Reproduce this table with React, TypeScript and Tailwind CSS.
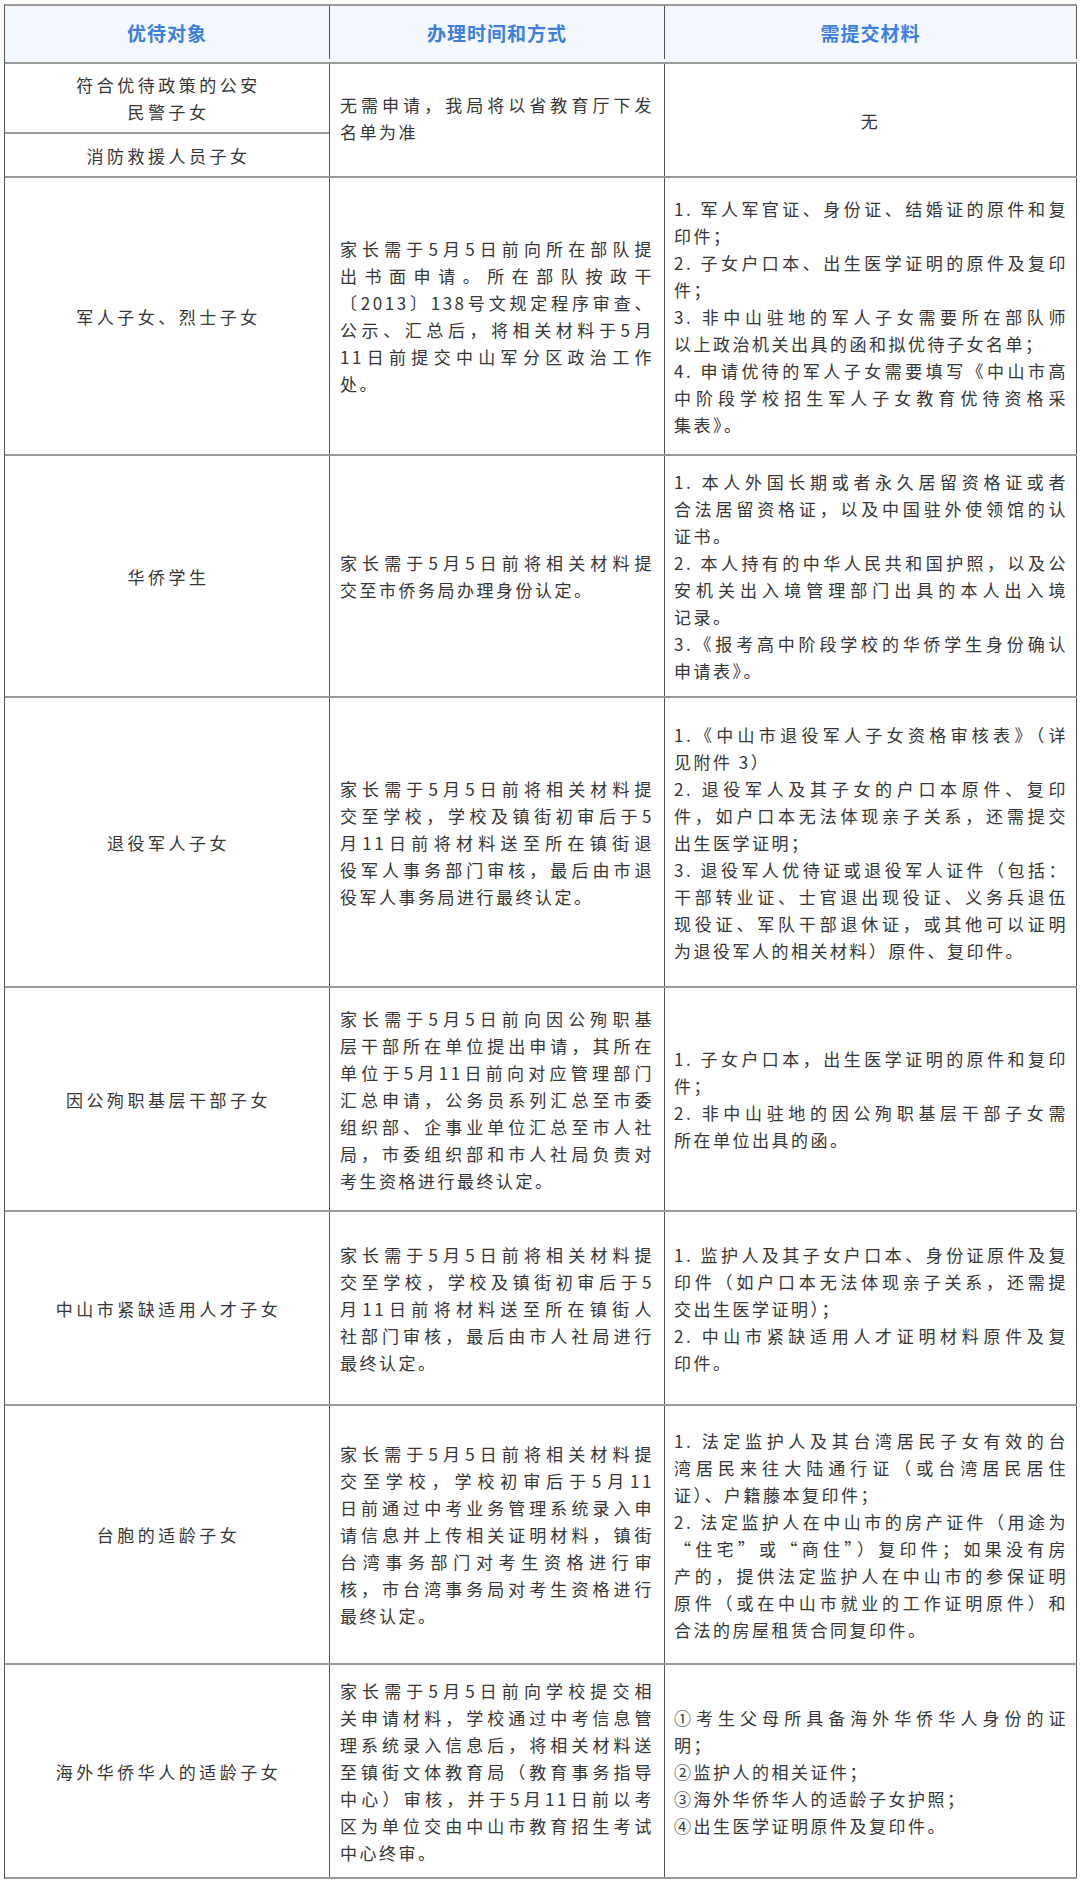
import React from "react";

type Cell = string[][];

interface Row {
    label: string[];
    height: string;
    process: Cell;
    materials: Cell;
}

const rows: Row[] = [
    {
        label: ["军人子女、烈士子女"],
        height: "h-[278px]",
        process: [
            [
                "家长需于5月5日前向所在部队提",
                "出书面申请。所在部队按政干",
                "〔2013〕138号文规定程序审查、",
                "公示、汇总后，将相关材料于5月",
                "11日前提交中山军分区政治工作",
                "处。",
            ],
        ],
        materials: [
            ["1. 军人军官证、身份证、结婚证的原件和复", "印件；"],
            ["2. 子女户口本、出生医学证明的原件及复印", "件；"],
            ["3. 非中山驻地的军人子女需要所在部队师", "以上政治机关出具的函和拟优待子女名单；"],
            ["4. 申请优待的军人子女需要填写《中山市高", "中阶段学校招生军人子女教育优待资格采", "集表》。"],
        ],
    },
    {
        label: ["华侨学生"],
        height: "h-[242px]",
        process: [["家长需于5月5日前将相关材料提", "交至市侨务局办理身份认定。"]],
        materials: [
            ["1. 本人外国长期或者永久居留资格证或者", "合法居留资格证，以及中国驻外使领馆的认", "证书。"],
            ["2. 本人持有的中华人民共和国护照，以及公", "安机关出入境管理部门出具的本人出入境", "记录。"],
            ["3.《报考高中阶段学校的华侨学生身份确认", "申请表》。"],
        ],
    },
    {
        label: ["退役军人子女"],
        height: "h-[290px]",
        process: [
            [
                "家长需于5月5日前将相关材料提",
                "交至学校，学校及镇街初审后于5",
                "月11日前将材料送至所在镇街退",
                "役军人事务部门审核，最后由市退",
                "役军人事务局进行最终认定。",
            ],
        ],
        materials: [
            ["1.《中山市退役军人子女资格审核表》（详", "见附件 3）"],
            ["2. 退役军人及其子女的户口本原件、复印", "件，如户口本无法体现亲子关系，还需提交", "出生医学证明；"],
            [
                "3. 退役军人优待证或退役军人证件（包括：",
                "干部转业证、士官退出现役证、义务兵退伍",
                "现役证、军队干部退休证，或其他可以证明",
                "为退役军人的相关材料）原件、复印件。",
            ],
        ],
    },
    {
        label: ["因公殉职基层干部子女"],
        height: "h-[224px]",
        process: [
            [
                "家长需于5月5日前向因公殉职基",
                "层干部所在单位提出申请，其所在",
                "单位于5月11日前向对应管理部门",
                "汇总申请，公务员系列汇总至市委",
                "组织部、企事业单位汇总至市人社",
                "局，市委组织部和市人社局负责对",
                "考生资格进行最终认定。",
            ],
        ],
        materials: [
            ["1. 子女户口本，出生医学证明的原件和复印", "件；"],
            ["2. 非中山驻地的因公殉职基层干部子女需", "所在单位出具的函。"],
        ],
    },
    {
        label: ["中山市紧缺适用人才子女"],
        height: "h-[194px]",
        process: [
            [
                "家长需于5月5日前将相关材料提",
                "交至学校，学校及镇街初审后于5",
                "月11日前将材料送至所在镇街人",
                "社部门审核，最后由市人社局进行",
                "最终认定。",
            ],
        ],
        materials: [
            ["1. 监护人及其子女户口本、身份证原件及复", "印件（如户口本无法体现亲子关系，还需提", "交出生医学证明）；"],
            ["2. 中山市紧缺适用人才证明材料原件及复", "印件。"],
        ],
    },
    {
        label: ["台胞的适龄子女"],
        height: "h-[259px]",
        process: [
            [
                "家长需于5月5日前将相关材料提",
                "交至学校，学校初审后于5月11",
                "日前通过中考业务管理系统录入申",
                "请信息并上传相关证明材料，镇街",
                "台湾事务部门对考生资格进行审",
                "核，市台湾事务局对考生资格进行",
                "最终认定。",
            ],
        ],
        materials: [
            ["1. 法定监护人及其台湾居民子女有效的台", "湾居民来往大陆通行证（或台湾居民居住", "证）、户籍藤本复印件；"],
            [
                "2. 法定监护人在中山市的房产证件（用途为",
                "“住宅”或“商住”）复印件；如果没有房",
                "产的，提供法定监护人在中山市的参保证明",
                "原件（或在中山市就业的工作证明原件）和",
                "合法的房屋租赁合同复印件。",
            ],
        ],
    },
    {
        label: ["海外华侨华人的适龄子女"],
        height: "h-[214px]",
        process: [
            [
                "家长需于5月5日前向学校提交相",
                "关申请材料，学校通过中考信息管",
                "理系统录入信息后，将相关材料送",
                "至镇街文体教育局（教育事务指导",
                "中心）审核，并于5月11日前以考",
                "区为单位交由中山市教育招生考试",
                "中心终审。",
            ],
        ],
        materials: [
            ["①考生父母所具备海外华侨华人身份的证", "明；"],
            ["②监护人的相关证件；"],
            ["③海外华侨华人的适龄子女护照；"],
            ["④出生医学证明原件及复印件。"],
        ],
    },
];

// every line but the last of a paragraph is spread to the full width
const Paragraphs = ({ cell }: { cell: Cell }) => (
    <div className="w-full">
        {cell.map((para, i) => (
            <div key={i}>
                {para.map((line, j) => (
                    <div
                        key={j}
                        className={
                            j < para.length - 1
                                ? "text-justify [text-align-last:justify]"
                                : "text-left"
                        }
                    >
                        {line}
                    </div>
                ))}
            </div>
        ))}
    </div>
);

export default function App() {
    return (
        <div
            lang="zh-CN"
            className="min-h-[1881px] w-[1080px] bg-white pt-[4px] pl-[4px] text-[17px] leading-[27px] tracking-[2.5px] text-[#363636] font-['Noto_Sans_CJK_SC','Noto_Sans',sans-serif]"
        >
            <div className="w-[1073px] border-t-2 border-l border-t-[#9a9a9a] border-l-[#555]">
                {/* Header */}
                <div className="flex h-[58px] border-b-2 border-[#9a9a9a] bg-[#f3f7fe] pb-[3px] text-[19px] font-bold tracking-[1px] text-[#3d7fdd]">
                    <div className="flex w-[325px] items-center justify-center border-r border-[#555]">优待对象</div>
                    <div className="flex w-[335px] items-center justify-center border-r border-[#555]">办理时间和方式</div>
                    <div className="flex w-[412px] items-center justify-center border-r border-[#555]">需提交材料</div>
                </div>

                {/* First row: two target groups share one procedure */}
                <div className="flex h-[114px] border-b-2 border-[#9a9a9a]">
                    <div className="flex w-[325px] flex-col border-r border-[#555] tracking-[3.5px]">
                        <div className="flex h-[70px] flex-col items-center justify-center border-b-2 border-[#9a9a9a] pl-[3px] text-center">
                            <div>符合优待政策的公安</div>
                            <div>民警子女</div>
                        </div>
                        <div className="flex flex-1 items-center justify-center pl-[3px]">消防救援人员子女</div>
                    </div>
                    <div className="flex w-[335px] items-center border-r border-[#555] px-[10px] pb-[4px]">
                        <Paragraphs cell={[["无需申请，我局将以省教育厅下发", "名单为准"]]} />
                    </div>
                    <div className="flex w-[412px] items-center justify-center border-r border-[#555]">无</div>
                </div>

                {rows.map((row) => (
                    <div key={row.label[0]} className={`flex border-b-2 border-[#9a9a9a] ${row.height}`}>
                        <div className="flex w-[325px] flex-col items-center justify-center border-r border-[#555] pl-[3px] text-center tracking-[3.5px]">
                            {row.label.map((l) => (
                                <div key={l}>{l}</div>
                            ))}
                        </div>
                        <div className="flex w-[335px] items-center border-r border-[#555] px-[10px]">
                            <Paragraphs cell={row.process} />
                        </div>
                        <div className="flex w-[412px] items-center border-r border-[#555] pl-[9px] pr-[8px]">
                            <Paragraphs cell={row.materials} />
                        </div>
                    </div>
                ))}
            </div>
        </div>
    );
}
